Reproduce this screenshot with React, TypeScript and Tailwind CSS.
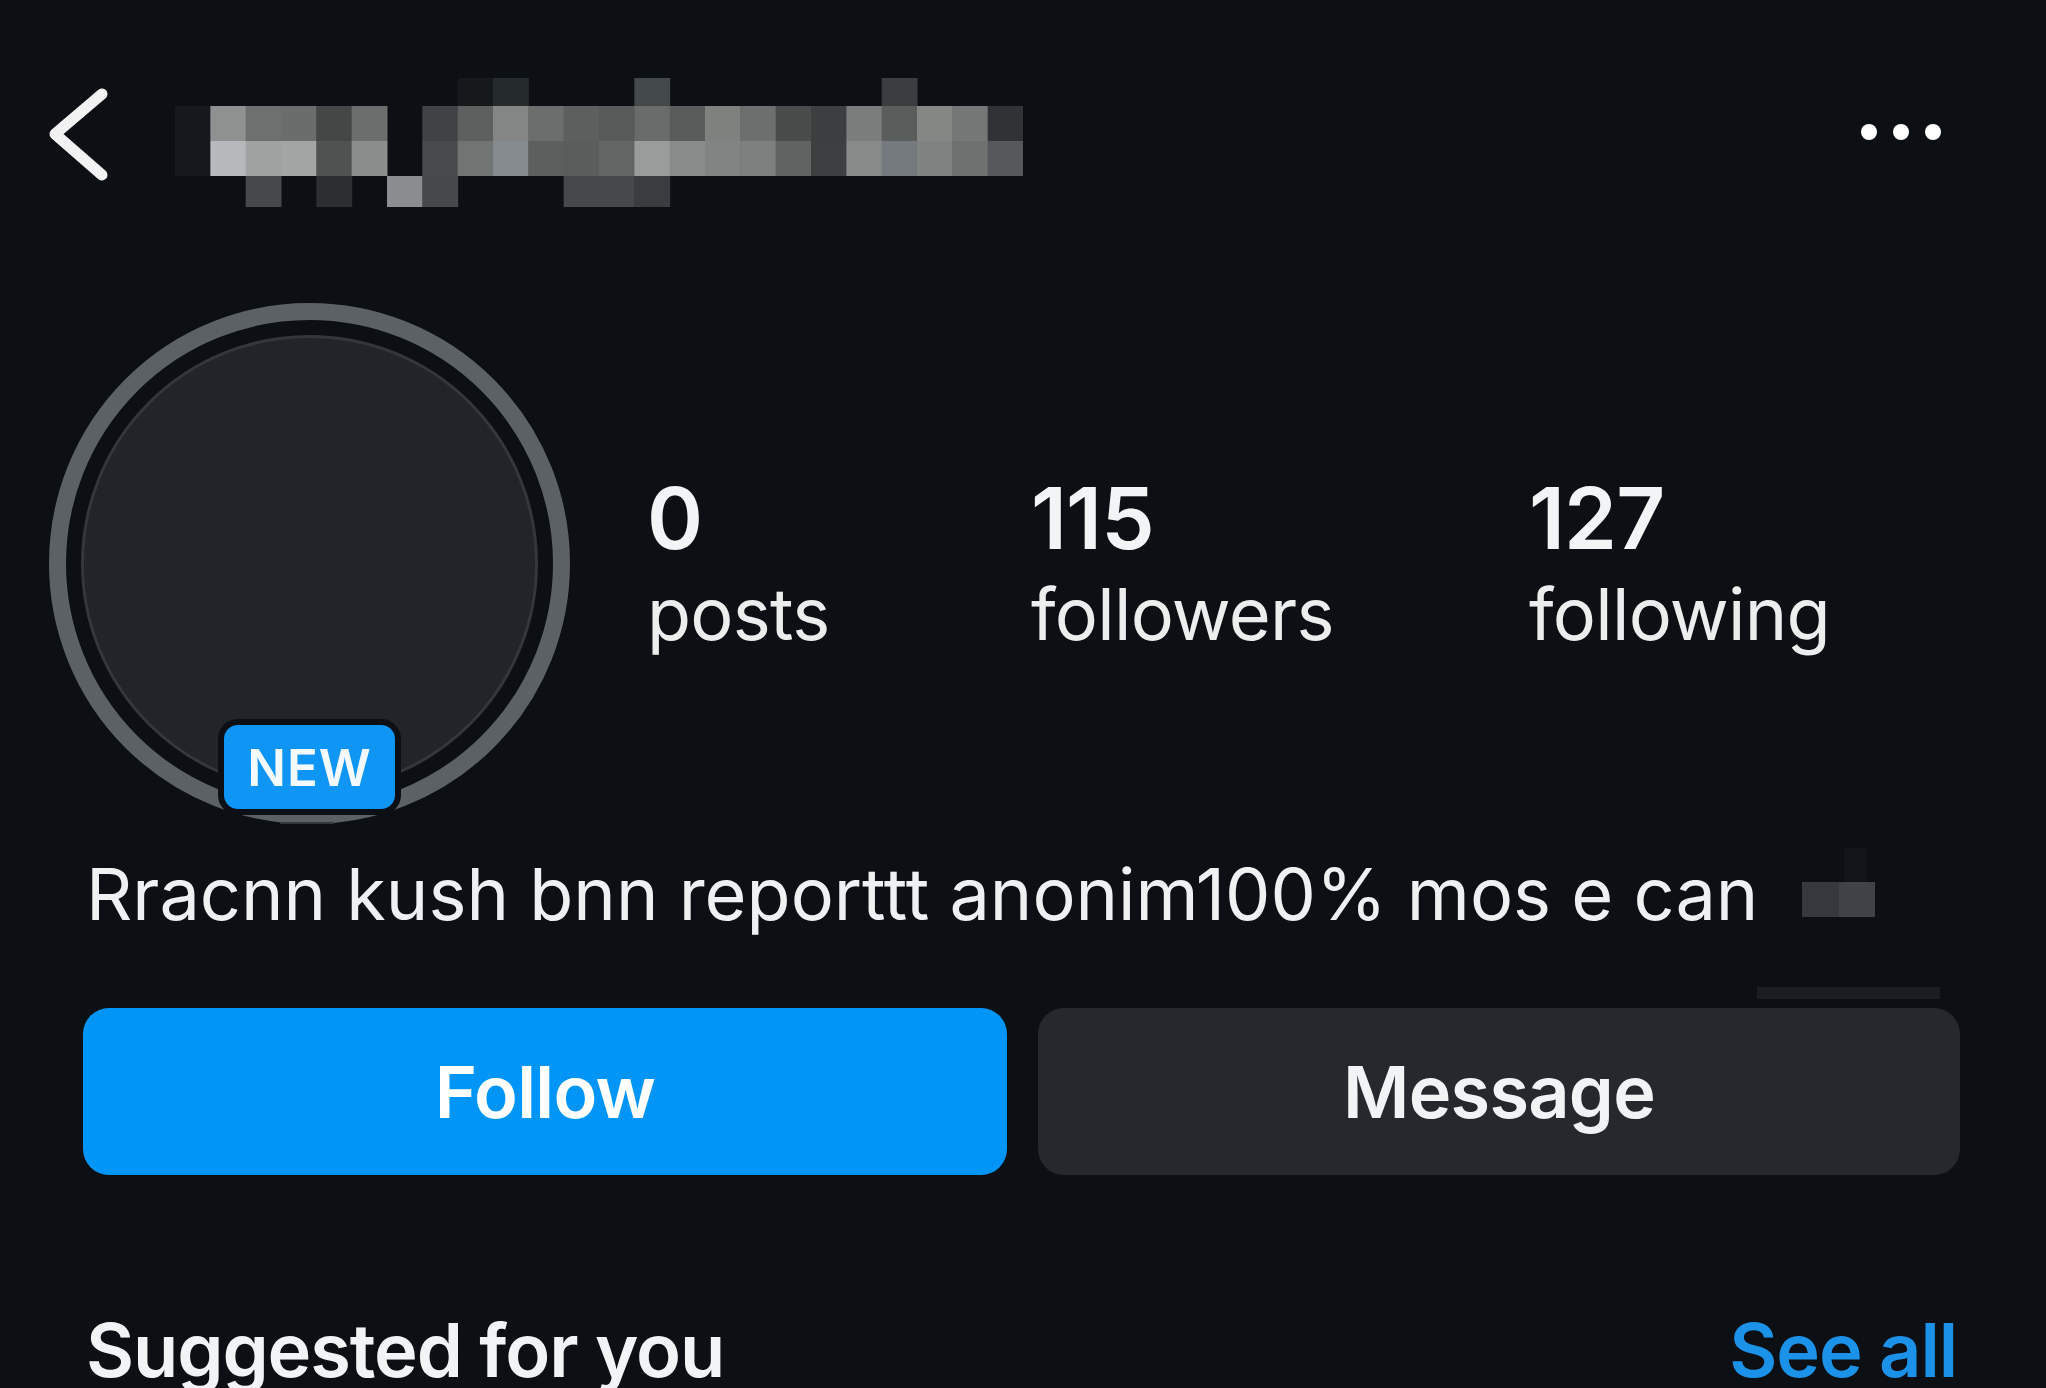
import React from 'react';

// pixelated username, one row per band, null = background
const mosaicRows: (string | null)[][] = [
  [null, null, null, null, null, null, null, null, '#16191c', '#252a2d', null, null, null, '#43484b', null, null, null, null, null, null, '#3a3e41', null, null, null],
  ['#15191d', '#8f9190', '#6e706f', '#6b6d6c', '#454747', '#6c6e6d', null, '#3f4345', '#5e605f', '#848685', '#6c6e6d', '#5d5f5e', '#585a59', '#6a6c6b', '#5a5c5b', '#7f817f', '#6d6f6e', '#4a4c4c', '#3c3e3f', '#7b7d7c', '#595d5c', '#858785', '#767877', '#303235'],
  ['#15191d', '#b5b9bb', '#a0a2a1', '#a3a5a4', '#505252', '#8c8e8d', null, '#474b4d', '#707473', '#848a8e', '#5d5f5e', '#5b5d5c', '#636564', '#9a9c9b', '#8a8c8b', '#808583', '#7c807f', '#616362', '#3d3f40', '#868a89', '#747a7e', '#7f8382', '#6d7170', '#56585c'],
  [null, null, '#45494c', null, '#2b2f31', null, '#8a8e90', '#45494b', null, null, null, '#45494c', '#45494c', '#393d40', null, null, null, null, null, null, null, null, null, null],
];
const rowY = [5, 33, 68, 103, 134];
const colW = 848 / 24;

function UsernameMosaic() {
  return (
    <svg width="848" height="134" viewBox="0 0 848 134" className="shrink-0">
      {mosaicRows.map((row, r) =>
        row.map((c, i) =>
          c ? (
            <rect key={`${r}-${i}`} x={i * colW} y={rowY[r]} width={colW + 0.5} height={rowY[r + 1] - rowY[r]} fill={c} />
          ) : null
        )
      )}
    </svg>
  );
}

function Stat({ value, label }: { value: string; label: string }) {
  return (
    <div className="flex flex-col">
      <span className="text-[85px] leading-none font-semibold tracking-[-0.01em] text-[#f3f4f5]">{value}</span>
      <span className="text-[72px] leading-none mt-[17px] tracking-[-0.01em] text-[#eceded]">{label}</span>
    </div>
  );
}

export default function App() {
  return (
    <div className="w-[2046px] h-[1388px] overflow-hidden bg-[#0c1014] text-white font-['Inter','Noto_Sans',sans-serif]">
      {/* header */}
      <div className="flex items-start h-[134px] mt-[73px]">
        <svg width="72" height="110" viewBox="0 0 72 110" className="ml-[40px] mt-[6px] shrink-0">
          <path d="M62 15 L15 55 L62 96" fill="none" stroke="#f2f2f2" strokeWidth="11" strokeLinecap="round" strokeLinejoin="round" />
        </svg>
        <div className="ml-[63px]">
          <UsernameMosaic />
        </div>
        <div className="ml-auto mr-[105px] mt-[51px] flex gap-[16px]">
          <div className="w-[16px] h-[16px] rounded-full bg-white" />
          <div className="w-[16px] h-[16px] rounded-full bg-white" />
          <div className="w-[16px] h-[16px] rounded-full bg-white" />
        </div>
      </div>

      {/* avatar + stats */}
      <div className="flex items-start mt-[96px] pl-[49px]">
        <div className="relative w-[521px] h-[521px] shrink-0">
          <div className="w-full h-full rounded-full border-[17px] border-[#5c6166] p-[15px]">
            <div className="w-full h-full rounded-full bg-[#212428] border-[3px] border-[#33373b]" />
          </div>
          <div className="absolute left-[169px] top-[416px] w-[183px] h-[96px] rounded-[20px] border-[6px] border-[#0c1014] bg-[#0f95f3] flex items-center justify-center">
            <span className="text-[51px] leading-none font-semibold tracking-[0.02em] text-[#f4f9ff]">NEW</span>
          </div>
          <div className="absolute left-[231px] top-[519px] w-[54px] h-[2px] bg-[#34383c]" />
        </div>
        <div className="flex ml-[77px] mt-[173px]">
          <div className="w-[384px]">
            <Stat value="0" label="posts" />
          </div>
          <div className="w-[498px]">
            <Stat value="115" label="followers" />
          </div>
          <Stat value="127" label="following" />
        </div>
      </div>

      {/* bio */}
      <div className="flex items-start mt-[34px] pl-[86px]">
        <span className="text-[72px] leading-none text-[#eef0f1] whitespace-nowrap">
          Rracnn kush bnn reporttt anonim100% mos e can
        </span>
        <svg width="73" height="69" viewBox="0 0 73 69" className="ml-[44px] -mt-[10px] shrink-0">
          <rect x="42" y="0" width="23" height="34" fill="#111519" />
          <rect x="0" y="34" width="37" height="35" fill="#35383c" />
          <rect x="37" y="34" width="36" height="35" fill="#3f4246" />
        </svg>
      </div>

      <div className="mt-[57px] ml-[1757px] w-[183px] h-[12px] bg-[#1a1d21]" />

      {/* buttons */}
      <div className="flex gap-[31px] mt-[9px] pl-[83px]">
        <button className="w-[924px] h-[167px] rounded-[26px] bg-[#0095f6] flex items-center justify-center">
          <span className="text-[72px] leading-none font-semibold tracking-[-0.01em] text-white">Follow</span>
        </button>
        <button className="w-[922px] h-[167px] rounded-[26px] bg-[#25292d] flex items-center justify-center">
          <span className="text-[72px] leading-none font-semibold tracking-[-0.01em] text-[#f2f3f4]">Message</span>
        </button>
      </div>

      {/* suggested */}
      <div className="flex justify-between items-start mt-[138px] pl-[86px] pr-[89px]">
        <span className="text-[74px] leading-none font-semibold tracking-[-0.015em] text-[#f2f3f4]">Suggested for you</span>
        <span className="text-[74px] leading-none font-semibold tracking-[-0.015em] text-[#1b91e8]">See all</span>
      </div>
    </div>
  );
}
